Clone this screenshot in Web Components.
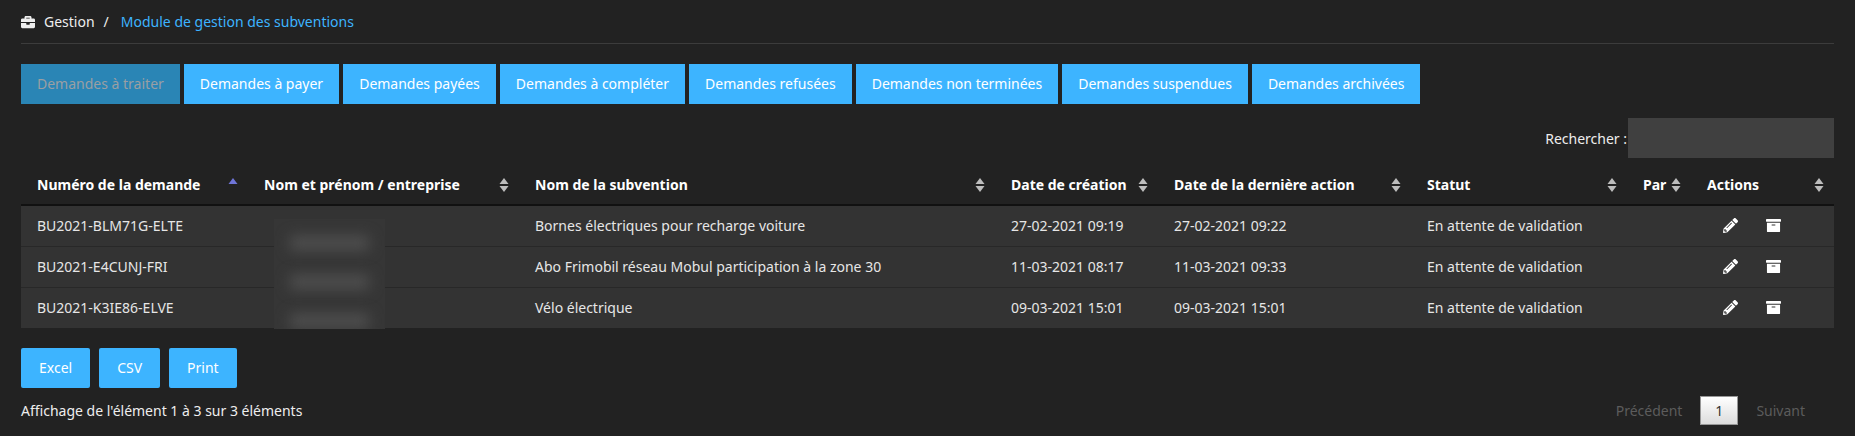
<!DOCTYPE html>
<html lang="fr">
<head>
<meta charset="utf-8">
<title>Module de gestion des subventions</title>
<style>
    html, body { margin: 0; background: #222; }
    body { font: 14px "Noto Sans", "Open Sans", sans-serif; color: #eee; }
</style>
</head>
<body>
<subsidy-page>
    <page-breadcrumb root="Gestion" current="Module de gestion des subventions"></page-breadcrumb>
    <tab-bar>
        <tab-button disabled>Demandes à traiter</tab-button>
        <tab-button>Demandes à payer</tab-button>
        <tab-button>Demandes payées</tab-button>
        <tab-button>Demandes à compléter</tab-button>
        <tab-button>Demandes refusées</tab-button>
        <tab-button>Demandes non terminées</tab-button>
        <tab-button>Demandes suspendues</tab-button>
        <tab-button>Demandes archivées</tab-button>
    </tab-bar>
    <search-box></search-box>
    <request-table></request-table>
    <table-footer></table-footer>
</subsidy-page>

<script>
const ICONS = {
    briefcase: 'M320 336c0 8.84-7.16 16-16 16h-96c-8.84 0-16-7.16-16-16v-48H0v144c0 25.6 22.4 48 48 48h416c25.6 0 48-22.4 48-48V288H320v48zm144-208h-80V80c0-25.6-22.4-48-48-48H176c-25.6 0-48 22.4-48 48v48H48c-25.6 0-48 22.4-48 48v80h512v-80c0-25.6-22.4-48-48-48zm-144 0H192V96h128v32z',
    pencil: 'M497.9 142.1l-46.1 46.1c-4.7 4.7-12.3 4.7-17 0l-111-111c-4.7-4.7-4.7-12.3 0-17l46.1-46.1c18.7-18.7 49.1-18.7 67.9 0l60.1 60.1c18.8 18.7 18.8 49.1 0 67.9zM284.2 99.8L21.6 362.4.4 483.9c-2.9 16.4 11.4 30.6 27.8 27.8l121.5-21.3 262.6-262.6c4.7-4.7 4.7-12.3 0-17l-111-111c-4.8-4.7-12.4-4.7-17.1 0zM124.1 339.9c-5.5-5.5-5.5-14.3 0-19.8l154-154c5.5-5.5 14.3-5.5 19.8 0s5.5 14.3 0 19.8l-154 154c-5.5 5.5-14.3 5.5-19.8 0zM88 424h48v36.3l-64.5 11.3-31.1-31.1L51.7 376H88v48z',
    archive: 'M32 448c0 17.7 14.3 32 32 32h384c17.7 0 32-14.3 32-32V160H32v288zm160-212c0-6.6 5.4-12 12-12h104c6.6 0 12 5.4 12 12v8c0 6.6-5.4 12-12 12H204c-6.6 0-12-5.4-12-12v-8zM480 32H32C14.3 32 0 46.3 0 64v48c0 8.8 7.2 16 16 16h480c8.8 0 16-7.2 16-16V64c0-17.7-14.3-32-32-32z'
};

const icon = (name, size) =>
    `<svg width="${size}" height="${size}" viewBox="0 0 512 512" fill="currentColor"><path d="${ICONS[name]}"/></svg>`;

class SubsidyPage extends HTMLElement {
    constructor() {
        super();
        this.attachShadow({ mode: 'open' }).innerHTML = `
<style>
    :host {
        display: block;
        padding: 0 21px;
        height: 436px;
        box-sizing: border-box;
    }
</style>
<slot></slot>`;
    }
}

class PageBreadcrumb extends HTMLElement {
    connectedCallback() {
        this.attachShadow({ mode: 'open' }).innerHTML = `
<style>
    :host {
        display: flex;
        align-items: center;
        height: 43px;
        border-bottom: 1px solid #3c3c3c;
        line-height: 46px;
        color: #eee;
    }
    svg { margin-right: 9px; }
    .sep { margin: 0 12px 0 9px; }
    .current { color: #3db4ff; }
</style>
${icon('briefcase', 14)}<span>${this.getAttribute('root')}</span><span class="sep">/</span><span class="current">${this.getAttribute('current')}</span>`;
    }
}

class TabBar extends HTMLElement {
    constructor() {
        super();
        this.attachShadow({ mode: 'open' }).innerHTML = `
<style>
    :host {
        display: flex;
        gap: 4px;
        margin-top: 20px;
    }
</style>
<slot></slot>`;
    }
}

class TabButton extends HTMLElement {
    constructor() {
        super();
        this.attachShadow({ mode: 'open' }).innerHTML = `
<style>
    :host {
        display: block;
        padding: 0 16px;
        line-height: 40px;
        background: #3db4ff;
        color: #fff;
    }
    :host([disabled]) {
        background: #2a85b5;
        color: #9a9fa3;
    }
</style>
<slot></slot>`;
    }
}

class SearchBox extends HTMLElement {
    constructor() {
        super();
        this.attachShadow({ mode: 'open' }).innerHTML = `
<style>
    :host {
        display: flex;
        justify-content: flex-end;
        align-items: center;
        margin-top: 14px;
    }
    .field {
        width: 206px;
        height: 40px;
        margin-left: 1px;
        background: #404040;
    }
</style>
<span>Rechercher :</span><div class="field"></div>`;
    }
}

const COLUMNS = [
    { title: 'Numéro de la demande', width: 227, sort: 'asc' },
    { title: 'Nom et prénom / entreprise', width: 271 },
    { title: 'Nom de la subvention', width: 476 },
    { title: 'Date de création', width: 163 },
    { title: 'Date de la dernière action', width: 253 },
    { title: 'Statut', width: 216 },
    { title: 'Par', width: 64 },
    { title: 'Actions', width: 143 }
];

const REQUESTS = [
    ['BU2021-BLM71G-ELTE', 'Bornes électriques pour recharge voiture', '27-02-2021 09:19', '27-02-2021 09:22'],
    ['BU2021-E4CUNJ-FRI', 'Abo Frimobil réseau Mobul participation à la zone 30', '11-03-2021 08:17', '11-03-2021 09:33'],
    ['BU2021-K3IE86-ELVE', 'Vélo électrique', '09-03-2021 15:01', '09-03-2021 15:01']
];

class RequestTable extends HTMLElement {
    connectedCallback() {
        const head = COLUMNS.map(c => `
            <th style="width:${c.width}px">
                <div class="th"><span>${c.title}</span>
                    <svg class="sort ${c.sort || ''}" width="10" height="16" viewBox="0 0 10 16">
                        <path class="up" d="M5 1 9.500 7H.5z"/><path class="down" d="M5 15 .5 9h9z"/>
                    </svg>
                </div>
            </th>`).join('');

        const rows = REQUESTS.map(r => `
            <tr>
                <td>${r[0]}</td>
                <td></td>
                <td>${r[1]}</td>
                <td>${r[2]}</td>
                <td>${r[3]}</td>
                <td>En attente de validation</td>
                <td></td>
                <td><div class="actions">${icon('pencil', 15)}${icon('archive', 15)}</div></td>
            </tr>`).join('');

        this.attachShadow({ mode: 'open' }).innerHTML = `
<style>
    :host {
        display: block;
        position: relative;
        margin-top: 7px;
    }
    table {
        width: 100%;
        border-collapse: collapse;
        table-layout: fixed;
    }
    th {
        height: 40px;
        padding: 0 10px 0 16px;
        text-align: left;
        font-weight: 700;
        color: #fff;
        border-bottom: 2px solid #111;
        box-sizing: border-box;
    }
    .th {
        display: flex;
        justify-content: space-between;
        align-items: center;
    }
    .sort { fill: #bdbdbd; flex: none; }
    .sort.asc .up { fill: #6f75d8; }
    .sort.asc .down { fill: none; }
    td {
        height: 41px;
        padding: 0 16px;
        background: #333;
        color: #e6e6e6;
        border-bottom: 1px solid #282828;
        box-sizing: border-box;
        white-space: nowrap;
    }
    tr:last-child td { border-bottom: 0; }
    .actions {
        display: flex;
        gap: 28px;
        padding-left: 16px;
        color: #fff;
    }
    .redacted {
        position: absolute;
        left: 253px;
        top: 54px;
        width: 111px;
        height: 110px;
        background: #363636;
        overflow: hidden;
    }
    .redacted i {
        display: block;
        height: 14px;
        margin: 17px 16px 25px;
        background: #505050;
        filter: blur(7px);
    }
</style>
<table>
    <thead><tr>${head}</tr></thead>
    <tbody>${rows}</tbody>
</table>
<div class="redacted"><i></i><i></i><i></i></div>`;
    }
}

class TableFooter extends HTMLElement {
    connectedCallback() {
        this.attachShadow({ mode: 'open' }).innerHTML = `
<style>
    :host {
        display: grid;
        grid-template-columns: 1fr auto;
        margin-top: 20px;
    }
    .export {
        grid-column: 1 / -1;
        display: flex;
        gap: 9px;
    }
    .export span {
        padding: 0 18px;
        line-height: 40px;
        background: #3db4ff;
        color: #fff;
        border-radius: 2px;
    }
    .info { align-self: center; margin-top: 8px; color: #eee; }
    .pager {
        display: flex;
        align-items: center;
        gap: 18px;
        margin: 8px 29px 0 0;
        color: #5c5c5c;
    }
    .page {
        width: 36px;
        line-height: 27px;
        text-align: center;
        color: #333;
        border: 1px solid #979797;
        background: linear-gradient(#fff, #dcdcdc);
    }
</style>
<div class="export"><span>Excel</span><span>CSV</span><span>Print</span></div>
<div class="info">Affichage de l'élément 1 à 3 sur 3 éléments</div>
<div class="pager"><span>Précédent</span><span class="page">1</span><span>Suivant</span></div>`;
    }
}

customElements.define('subsidy-page', SubsidyPage);
customElements.define('page-breadcrumb', PageBreadcrumb);
customElements.define('tab-bar', TabBar);
customElements.define('tab-button', TabButton);
customElements.define('search-box', SearchBox);
customElements.define('request-table', RequestTable);
customElements.define('table-footer', TableFooter);
</script>
</body>
</html>
